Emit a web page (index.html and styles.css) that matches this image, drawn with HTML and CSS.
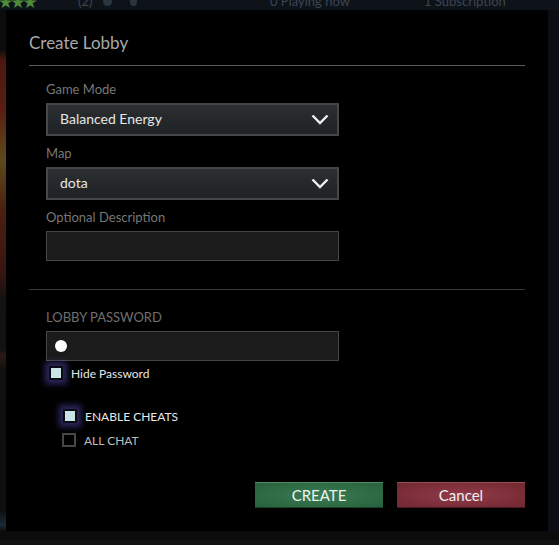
FILE: index.html
```html
<!DOCTYPE html>
<html>
<head>
<meta charset="utf-8">
<link rel="stylesheet" href="styles.css">
</head>
<body>
<div class="topbar">
  <span class="stars">★★★</span>
  <span class="count">(2)</span>
  <span class="ico ico1"></span>
  <span class="ico ico2"></span>
  <span class="playing">0 Playing now</span>
  <span class="subs">1 Subscription</span>
</div>
<div class="middle">
  <div class="leftstrip"></div>
  <div class="dialog">
    <div class="header"><h1 class="title">Create Lobby</h1></div>
    <div class="form">
      <div class="label first">Game Mode</div>
      <div class="select"><span>Balanced Energy</span>
        <svg class="chev" width="18" height="11" viewBox="0 0 18 11"><polyline points="1.5,1.5 9,9 16.5,1.5" fill="none" stroke="#f2f2f2" stroke-width="2.4"/></svg>
      </div>
      <div class="label">Map</div>
      <div class="select"><span>dota</span>
        <svg class="chev" width="18" height="11" viewBox="0 0 18 11"><polyline points="1.5,1.5 9,9 16.5,1.5" fill="none" stroke="#f2f2f2" stroke-width="2.4"/></svg>
      </div>
      <div class="label">Optional Description</div>
      <div class="input"></div>
    </div>
    <div class="divider"></div>
    <div class="form">
      <div class="label caps">LOBBY PASSWORD</div>
      <div class="input pw"><span class="dot"></span></div>
      <div class="check hide"><span class="box on"></span><span class="ctext">Hide Password</span></div>
      <div class="check cheats"><span class="box on"></span><span class="ctext caps2">ENABLE CHEATS</span></div>
      <div class="check allchat"><span class="box"></span><span class="ctext caps2">ALL CHAT</span></div>
    </div>
    <div class="buttons">
      <div class="btn create">CREATE</div>
      <div class="btn cancel">Cancel</div>
    </div>
  </div>
  <div class="rightstrip"></div>
</div>
<div class="bottom"></div>
</body>
</html>
```
FILE: styles.css
```css
* { box-sizing: border-box; }
html, body { margin: 0; padding: 0; }
body {
  width: 559px;
  height: 545px;
  overflow: hidden;
  background: #0a0a0a;
  font-family: Lato, "Open Sans", "DejaVu Sans", sans-serif;
}
.topbar {
  height: 10px;
  background: #0e1319;
  position: relative;
  overflow: hidden;
  color: #3b4652;
  font-size: 13px;
}
.topbar span { position: absolute; top: -7px; line-height: 16px; }
.stars { left: -2px; top: -6px !important; color: #4f8a3a; font-size: 17px; letter-spacing: -3px; }
.count { left: 78px; }
.ico { width: 9px; height: 9px; border-radius: 50%; background: #2b3540; top: -3px !important; }
.ico1 { left: 103px; }
.ico2 { left: 130px; width: 7px; }
.playing { left: 270px; }
.subs { left: 424px; }
.middle {
  display: flex;
  height: 521px;
}
.leftstrip {
  width: 6px;
  background: linear-gradient(#0c0c0c 0px, #0c0c0c 40px, #4a1810 50px, #5a1e12 100px, #5d4a1c 150px, #4a2010 200px, #3a1510 260px, #141212 290px, #121212 340px, #2a1a14 345px, #101010 360px, #0e0e0e 500px, #1a2a36 515px, #0e0e0e 521px);
}
.rightstrip { width: 11px; background: #0b0e12; }
.dialog {
  width: 542px;
  background: #000;
  display: flex;
  flex-direction: column;
}
.header {
  margin: 0 23px;
  height: 56px;
  padding-top: 23px;
  border-bottom: 1px solid #5a5a5a;
}
.title {
  margin: 0;
  font-weight: normal;
  font-size: 17px;
  line-height: 20px;
  color: #a9a9a9;
}
.form {
  margin-left: 40px;
  width: 293px;
  display: flex;
  flex-direction: column;
}
.label {
  font-size: 13px;
  line-height: 16px;
  height: 16px;
  color: #777;
  margin-top: 9px;
  margin-bottom: 6px;
}
.label.first { margin-top: 15px; }
.label.caps { margin-top: 19px; color: #6f6f6f; }
.divider {
  margin: 28px 23px 0;
  border-top: 1px solid #3a3a3a;
}
.select {
  height: 33px;
  border: 2px solid #44484a;
  background: linear-gradient(#2b2f31, #1f2224);
  display: flex;
  align-items: center;
  justify-content: space-between;
  padding: 0 8px 2px 12px;
  color: #e6e6e6;
  font-size: 14px;
}
.chev { display: block; margin-top: 2px; }
.input {
  height: 30px;
  border: 1px solid #474747;
  background: #1b1b1b;
}
.input.pw { display: flex; align-items: center; padding-left: 8px; }
.dot { width: 12px; height: 12px; border-radius: 50%; background: #fff; }
.check {
  display: flex;
  align-items: center;
  height: 14px;
  color: #e8e8e8;
  font-size: 12px;
}
.check.hide { margin-top: 5px; margin-left: 3px; }
.check.cheats { margin-top: 29px; margin-left: 17px; }
.check.allchat { margin-top: 10px; margin-left: 16px; color: #bdbdbd; }
.box {
  width: 14px;
  height: 14px;
  border: 2px solid #474747;
  background: #000;
  margin-right: 8px;
}
.box.on {
  border: 2px solid #0a0a14;
  background: #c8e4e6;
  box-shadow: 0 0 6px 4px rgba(85, 80, 190, 0.5);
}
.caps2 { font-size: 12px; }
.buttons {
  display: flex;
  justify-content: flex-end;
  gap: 14px;
  margin: 35px 23px 0 0;
}
.btn {
  width: 128px;
  height: 26px;
  display: flex;
  align-items: center;
  justify-content: center;
  font-size: 15px;
  color: #eef2ee;
}
.create {
  background: radial-gradient(ellipse at center, #3a7b52 0%, #2d6943 70%, #28603d 100%);
  border-top: 1px solid #4d8f63;
  border-bottom: 1px solid #1d3f2a;
}
.cancel {
  background: radial-gradient(ellipse at center, #933a4c 0%, #7a2d36 70%, #702932 100%);
  border-top: 1px solid #9a4a55;
  border-bottom: 1px solid #4a1a20;
}
.bottom {
  height: 14px;
  background: #0b0b0b;
  border-bottom: 5px solid #121212;
}
```
